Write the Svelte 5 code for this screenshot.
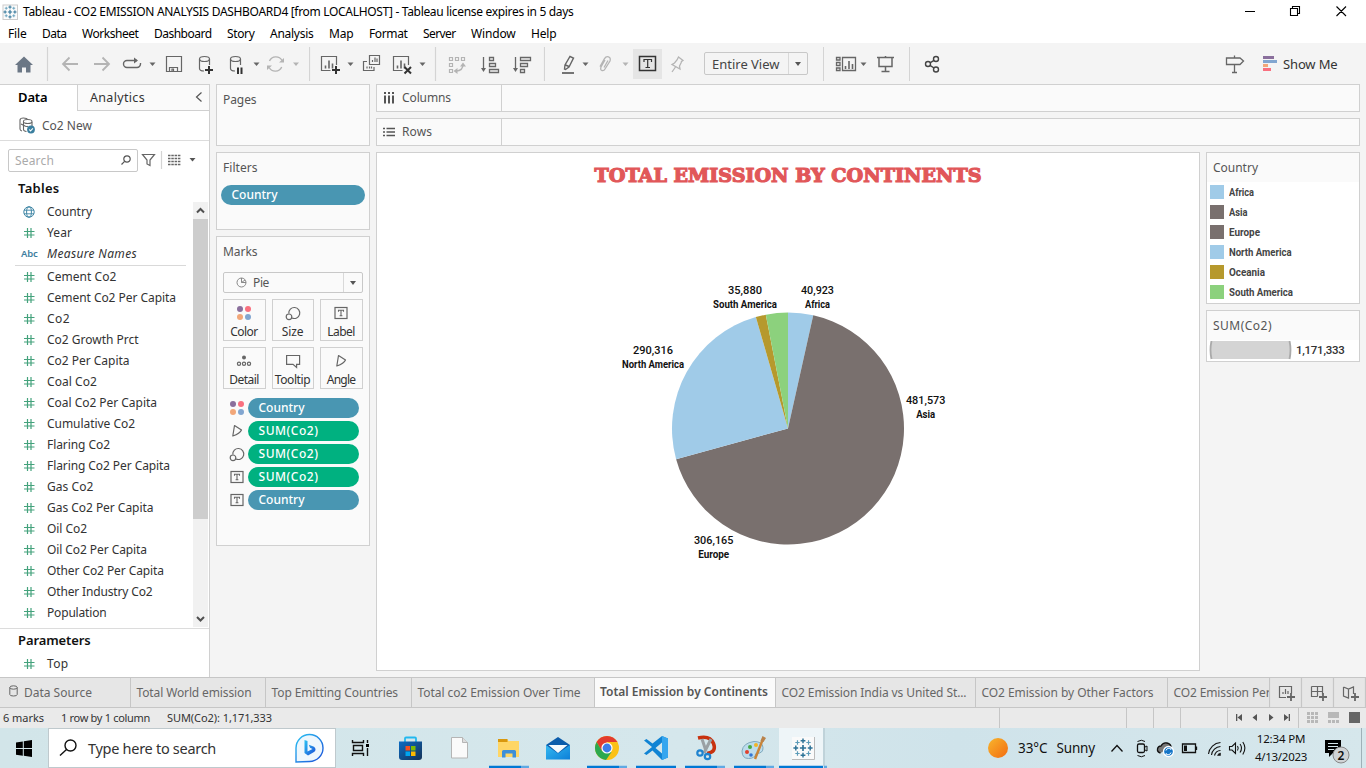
<script>
  const menus = [
    ['File', 8, 18.5], ['Data', 42, 24.5], ['Worksheet', 82, 56.5], ['Dashboard', 154, 57.5], ['Story', 227, 27.5],
    ['Analysis', 270, 43.5], ['Map', 329, 24.5], ['Format', 369, 38.5], ['Server', 423, 32.5], ['Window', 471, 44.5], ['Help', 531, 25.5]
  ].map((m, i, all) => ({ name: m[0], w: m[2], gap: i ? m[1] - all[i - 1][1] - all[i - 1][2] : m[1] }));

  const fields = [
    ['geo', 'Country', 45], ['num', 'Year', 25], ['abc', 'Measure Names', 90]
  ];
  const measures = [
    ['Cement Co2', 69.5], ['Cement Co2 Per Capita', 129], ['Co2', 23], ['Co2 Growth Prct', 91.5], ['Co2 Per Capita', 82.5],
    ['Coal Co2', 50], ['Coal Co2 Per Capita', 110], ['Cumulative Co2', 88], ['Flaring Co2', 63], ['Flaring Co2 Per Capita', 123],
    ['Gas Co2', 46.5], ['Gas Co2 Per Capita', 106.5], ['Oil Co2', 40], ['Oil Co2 Per Capita', 100], ['Other Co2 Per Capita', 117],
    ['Other Industry Co2', 105.5], ['Population', 59.5]
  ];
  const markButtons = [['color', 'Color', 27.5], ['size', 'Size', 21.5], ['label', 'Label', 27.5], ['detail', 'Detail', 29.5], ['tooltip', 'Tooltip', 35.5], ['angle', 'Angle', 28.5]];
  const pills = [
    ['color', 'Country', 46, 'blue'], ['angle', 'SUM(Co2)', 60, 'green'], ['size', 'SUM(Co2)', 60, 'green'],
    ['label', 'SUM(Co2)', 60, 'green'], ['label', 'Country', 46, 'blue']
  ];
  const legend = [
    ['Africa', '#a0cbe8', 25], ['Asia', '#79706e', 18.5], ['Europe', '#79706e', 31],
    ['North America', '#a0cbe8', 62.5], ['Oceania', '#b6992d', 36], ['South America', '#8cd17d', 64]
  ];
  const values = [40923, 481573, 306165, 290316, 16476, 35880];
  const total = values.reduce((a, b) => a + b, 0);
  const cx = 788, cy = 428.5, r = 116;
  // Neighbouring slices of one colour are drawn as a single sector.
  const sectors = [];
  values.forEach((v, i) => {
    const last = sectors[sectors.length - 1];
    if (last && last.color === legend[i][1]) last.value += v;
    else sectors.push({ value: v, color: legend[i][1] });
  });
  let run = 0;
  const slices = sectors.map(({ value, color }) => {
    const a = (run / total) * Math.PI * 2;
    run += value;
    const b = (run / total) * Math.PI * 2;
    const big = b - a > Math.PI ? 1 : 0;
    return {
      color,
      d: `M${cx} ${cy}L${cx + r * Math.sin(a)} ${cy - r * Math.cos(a)}A${r} ${r} 0 ${big} 1 ${cx + r * Math.sin(b)} ${cy - r * Math.cos(b)}Z`
    };
  });
  const labels = [
    ['40,923', 'Africa', 817.5, 294, 33, 25], ['481,573', 'Asia', 925.7, 404, 39.5, 19], ['306,165', 'Europe', 713.7, 544, 39.5, 31],
    ['290,316', 'North America', 653, 354, 40, 62], ['35,880', 'South America', 745, 294, 34, 64]
  ];
  const sheets = [
    ['Total World emission', 135, 115], ['Top Emitting Countries', 146, 126.5], ['Total co2 Emission Over Time', 183, 163],
    ['Total Emission by Continents', 181, 168], ['CO2 Emission India vs United St...', 200, 185],
    ['CO2 Emission by Other Factors', 192, 172], ['CO2 Emission Per', 102, 97]
  ];

  // Spreads the letters of a label so that it fills a set width.
  function fit(node, width) {
    const own = node.getBoundingClientRect().width;
    node.style.letterSpacing = (width - own) / node.textContent.length + 'px';
  }
  // Condenses a label horizontally to a set width.
  function squeeze(node, width) {
    const own = node.getBoundingClientRect().width;
    node.style.transform = `scaleX(${width / own})`;
  }
</script>

{#snippet caret(x, y, c)}
  <path d="M{x - 3} {y - 1.5}h6l-3 3.5z" fill={c} stroke="none" />
{/snippet}

{#snippet bars(x, y)}
  <path d="M{x} {y}v-3M{x + 3.5} {y}v-8M{x + 7} {y}v-5" stroke="#666" stroke-width="1.6" fill="none" />
{/snippet}

{#snippet markIcon(kind)}
  <svg width="16" height="16" viewBox="0 0 16 16" fill="none" stroke="#666" stroke-width="1.2">
    {#if kind === 'color'}
      <g stroke="none"><circle cx="4" cy="4" r="3" fill="#8a6f9c" /><circle cx="12" cy="4" r="3" fill="#f9707f" /><circle cx="4" cy="12" r="3" fill="#f2a779" /><circle cx="12" cy="12" r="3" fill="#82a6d0" /></g>
    {:else if kind === 'size'}
      <path d="M3.800 8.500A5.500 5.500 0 1 1 7 13" /><circle cx="4" cy="11.800" r="2.800" />
    {:else if kind === 'label'}
      <rect x="2" y="2.500" width="12" height="11" /><path d="M5.500 6.800V5.200h5v1.600M8 5.200v5.500M6.600 10.800h2.800" stroke-width="1.100" />
    {:else if kind === 'detail'}
      <circle cx="8" cy="4.500" r="2" fill="#666" stroke="none" /><circle cx="3" cy="10.700" r="1.600" /><circle cx="8" cy="10.700" r="1.600" /><circle cx="13" cy="10.700" r="1.600" />
    {:else if kind === 'tooltip'}
      <path d="M1.600 2.500h13v8.800h-3v3.200l-3.600-3.200H1.600z" />
    {:else}
      <path d="M5.500 2.500L12.500 7Q11 10.500 3.800 13z" stroke-linejoin="round" />
    {/if}
  </svg>
{/snippet}

{#snippet hash()}
  <svg width="12" height="12" viewBox="0 0 12 12"><path d="M4.500 1v10M8 1v10M1 4.500h10.500M1 8h10.500" stroke="#44a27c" stroke-width="1.200" /></svg>
{/snippet}

{#snippet spark(x, y, s)}
  <g transform="translate({x} {y}) scale({s})" stroke="#2d7296" stroke-width="1.2">
    <path d="M0-2.6V2.6M-2.6 0H2.6" stroke-width="1.4" />
    <path d="M0-8v4M-2-6h4M0 4v4M-2 6h4M-8 0h4M-6-2v4M4 0h4M6-2v4" />
    <path d="M-4.6-6.4v3.6M-6.4-4.6h3.6M4.6-6.4v3.6M2.8-4.6h3.6M-4.6 2.8v3.6M-6.4 4.6h3.6M4.6 2.8v3.6M2.8 4.6h3.6" stroke="#5b9bb8" stroke-width="1" />
  </g>
{/snippet}

<div class="app">
  <header class="titlebar">
    <svg width="23" height="22" viewBox="0 0 23 22"><rect x="3" y="4" width="14.5" height="14.5" fill="#fcfcfc" stroke="#ccc" />{@render spark(10, 11, 0.82)}</svg>
    <span use:fit={550.5}>Tableau - CO2 EMISSION ANALYSIS DASHBOARD4 [from LOCALHOST] - Tableau license expires in 5 days</span>
    <svg class="end" width="136" height="22" viewBox="1230 0 136 22" fill="none" stroke="#000" stroke-width="1.1"><path d="M1245 10.5h10M1290.5 7.5h7v7h-7zM1292.500 7.500v-2h7v7h-2M1336.500 5.500l9.500 9.500M1346 5.500l-9.500 9.500" /></svg>
  </header>

  <nav class="menubar">
    {#each menus as m}<span style="margin-left:{m.gap}px;width:{m.w}px"><b use:fit={m.w}>{m.name}</b></span>{/each}
  </nav>

  <div class="toolbar">
    <svg width="309" height="41" viewBox="0 43 309 41" fill="none" stroke="#666" stroke-width="1.2">
      <path d="M24 56.500l9 8.500h-2.500v7.500h-4.500v-5h-4v5h-4.500V65H15z" fill="#6b7785" stroke="none" />
      <path d="M47.500 47v34" stroke="#d4d4d4" />
      <path d="M78 64H63M69.500 57.500L63 64l6.500 6.500M94 64h15M102.500 57.500L109 64l-6.500 6.500" stroke="#b4b4b4" stroke-width="1.8" />
      <path d="M137 60.500H127a3.500 3.500 0 0 0 0 7h10a3.500 3.500 0 0 0 3.500-3.500v-1" stroke-width="1.400" /><path d="M134 57.500v6l4-3z" fill="#666" stroke="none" />
      {@render caret(152.5, 64, '#666')}
      <path d="M166.500 56.500h15v15h-15zM169.500 71.500v-4h8v4M172 71v-2h1.500v2" />
      <path d="M199.500 59v9.500q0 2.500 4.500 2.500M209.500 59v6" /><ellipse cx="204.500" cy="59" rx="5" ry="2.500" /><path d="M209 66v8M205 70h8" stroke="#333" stroke-width="2" />
      <path d="M230.500 59v9.500q0 2.500 4.500 2.500M240.500 59v6" /><ellipse cx="235.500" cy="59" rx="5" ry="2.500" /><path d="M238 67.500v6.500M241.500 67.500v6.500" stroke="#333" stroke-width="2" />
      {@render caret(256.5, 64, '#666')}
      <g stroke="#b4b4b4"><path d="M269.500 61a7 7 0 0 1 12.500-.5M281.700 67a7 7 0 0 1-12.500.5" stroke-width="1.400" /><path d="M279 62.500h5v-4.500zM272 65.500h-5v4.500z" fill="#b4b4b4" stroke="none" /></g>
      {@render caret(296, 64, '#b4b4b4')}
    </svg>
    <svg width="236" height="41" viewBox="309 43 236 41" fill="none" stroke="#666" stroke-width="1.200">
      <path d="M309.500 47v34M435.500 47v34M544.500 47v34" stroke="#d4d4d4" />
      <path d="M336.500 65v-8.500h-15v14h9" />{@render bars(325.5, 68.5)}<path d="M336 66v8M332 70h8" stroke="#333" stroke-width="2" />
      {@render caret(350.5, 64, '#666')}
      <path d="M369.500 55.500h10v9h-10zM367 61.500h-3.500v9h10.500v-3.500M372.500 62v-2M375 62v-4.500M377 62v-3.500M367 68.500v-2M369.500 68.500v-2M371.500 68.500v-2" />
      <path d="M408.500 65v-8.500h-15v14h9" />{@render bars(397.5, 68.5)}<path d="M404.500 67l6.500 6.500M411 67l-6.500 6.500" stroke="#333" stroke-width="2" />
      {@render caret(422.500, 64, '#666')}
      <g stroke="#b4b4b4"><path d="M449.500 57.500h3v3h-3zM455.500 57.500h3v3h-3zM461.500 57.500h3v3h-3zM449.500 63.500h3v3h-3zM449.500 69.500h3v3h-3z" /><path d="M456 71q7 0 7-7" stroke-width="1.500" /><path d="M460 66.500h6l-3-4zM457.500 68v6l-4-3z" fill="#b4b4b4" stroke="none" /></g>
      <path d="M483.500 57v13M489.500 57.500h4v3h-4zM489.500 63.500h6v3h-6zM489.500 69.500h9v3h-9zM515.500 57v13M520.500 57.500h10v3h-10zM520.500 63.500h7v3h-7zM520.500 69.500h4v3h-4z" stroke-width="1.300" />
      <path d="M481 68h5l-2.500 4zM513 68h5l-2.500 4z" fill="#666" stroke="none" />
    </svg>
    <svg width="88" height="41" viewBox="545 43 88 41" fill="none" stroke="#666" stroke-width="1.200">
      <path d="M570 56.500l3.500 1.500-4.500 9-3.500 2.500-1-.5.500-4zM565.500 65l3.500 1.500" stroke-width="1.400" /><path d="M562 73h12" stroke-width="1.800" />
      {@render caret(585.500, 64, '#666')}
      <path d="M605 60l-4 7q-1 3 1 3.500t3-1.500l5-8q1-3.500-1.500-4.200t-4 1.800l-4.500 8M608 60.500l-4 7" stroke="#b4b4b4" stroke-width="1.300" />
      {@render caret(625.5, 64, '#b4b4b4')}
    </svg>
    <div class="pressed"><svg width="29" height="30" viewBox="633 49 29 30" fill="none" stroke="#333"><rect x="639.500" y="56.500" width="16" height="14" stroke-width="1.500" /><path d="M644 62v-2.500h7.500V62M647.700 59.500v8M645.500 67.500h4.500" stroke-width="1.200" /></svg></div>
    <svg width="42" height="41" viewBox="662 43 42 41" fill="none" stroke="#b4b4b4" stroke-width="1.300"><path d="M678.500 57l4.500 3.500-1.500 1-.5 1.500-1.500 3 .5 3-8-4.500 2.500-1.500 2.500-3zM675.500 67l-3.500 5" /></svg>
    <div class="combo"><span use:fit={67.5}>Entire View</span><i></i></div>
    <svg width="408" height="41" viewBox="808 43 408 41" fill="none" stroke="#666" stroke-width="1.300">
      <path d="M823.500 47v34M909.500 47v34" stroke="#d4d4d4" stroke-width="1" />
      <path d="M836.500 57.500h3.500v2.500h-3.500zM836.500 62.500h3.500v3h-3.500zM836.500 68h3.500v2.500h-3.500zM842.500 57.500h13v13h-13z" />{@render bars(845.5, 69)}
      {@render caret(863.5, 64, '#666')}
      <path d="M877 57.500h17M879 58v8.500h13V58M885.500 56v2M885.500 66.500v5M881.500 71.500h8" stroke-width="1.500" />
      <g stroke="#444" stroke-width="1.400"><circle cx="928" cy="64" r="2.500" /><circle cx="936" cy="59" r="2.500" /><circle cx="936" cy="69.500" r="2.500" /><path d="M930 62.800l4-2.500M930 65.300l4 2.700" /></g>
    </svg>
    <svg width="67" height="41" viewBox="1216 43 67 41" fill="none" stroke="#666" stroke-width="1.300">
      <path d="M1226.500 58h13.500l3.500 3-3.500 3.500h-13.500zM1234.500 55.500v2.500M1234.500 64.500v8M1232 72.500h5" />
      <g stroke="none"><path d="M1263 56h11v3h-11z" fill="#8a6f9c" /><path d="M1263 60h14v3h-14z" fill="#82a6d0" /><path d="M1263 64h5v3h-5z" fill="#f2a779" /><path d="M1263 68h8v3h-8z" fill="#f9707f" /></g>
    </svg>
    <span class="showme" use:fit={54.5}>Show Me</span>
  </div>

  <main>
    <aside>
      <div class="panetabs">
        <div class="datatab"><b use:fit={29.5}>Data</b></div>
        <div class="antab"><span use:fit={55}>Analytics</span><svg width="8" height="10" viewBox="0 0 8 10"><path d="M6.500.500L1.500 5l5 4.500" fill="none" stroke="#555" stroke-width="1.200" /></svg></div>
      </div>
      <div class="source">
        <svg width="17" height="17" viewBox="0 0 17 17" fill="none" stroke="#666" stroke-width="1.100"><path d="M3 14Q1 13.500 1 12V3Q1 1 4.500 1T8 2" /><path d="M4.500 5v7.500q0 1.500 3 2M13 5v4" /><ellipse cx="8.700" cy="4.500" rx="4.300" ry="2" /><path d="M2 7l3 1.500q2 1.500 4 .8" /><circle cx="12" cy="12.500" r="3.900" fill="#3b7f9f" stroke="none" /><path d="M10.200 12.500l1.300 1.400 2.400-2.600" stroke="#fff" /></svg>
        <span use:fit={50}>Co2 New</span>
      </div>
      <div class="searchrow">
        <div class="search"><span use:fit={39}>Search</span><svg width="10" height="10" viewBox="0 0 10 10" fill="none" stroke="#555" stroke-width="1.200"><circle cx="6" cy="4" r="3.200" /><path d="M3.600 6.300L.5 9.500" /></svg></div>
        <svg width="64" height="24" viewBox="138 148 64 24" fill="none" stroke="#666" stroke-width="1.200"><path d="M142.500 154.500h12l-4.500 5.500v5.500l-3-1.500v-4z" /><path d="M161.500 151v18" stroke="#d4d4d4" /><path d="M168 155.500h12.500M168 158.500h12.500M168 161.500h12.500M168 164.500h12.500" stroke-dasharray="2.500 .8" stroke-width="1.300" />{@render caret(192.5, 159.5, '#555')}</svg>
      </div>
      <h3><span use:fit={41.5}>Tables</span></h3>
      <div class="listwrap">
        <div class="list">
          {#each fields as f}
            <div class="field">
              {#if f[0] === 'geo'}<svg width="12" height="12" viewBox="0 0 12 12" fill="none" stroke="#3f86a5"><circle cx="6" cy="6" r="5.200" /><ellipse cx="6" cy="6" rx="2.400" ry="5.200" /><path d="M1 4.200h10M1 7.800h10" stroke-width=".9" /></svg>
              {:else if f[0] === 'num'}{@render hash()}
              {:else}<em><b use:fit={16.5}>Abc</b></em>{/if}
              <span class:ital={f[0] === 'abc'} use:fit={f[2]}>{f[1]}</span>
            </div>
          {/each}
          <hr />
          {#each measures as f}<div class="field">{@render hash()}<span use:fit={f[1]}>{f[0]}</span></div>{/each}
        </div>
        <div class="scroll">
          <svg width="15" height="17" viewBox="0 0 15 17"><path d="M4 10.500L7.500 7l3.500 3.500" fill="none" stroke="#505050" stroke-width="2" /></svg>
          <i></i>
          <svg width="15" height="17" viewBox="0 0 15 17"><path d="M4 7l3.500 3.500L11 7" fill="none" stroke="#505050" stroke-width="2" /></svg>
        </div>
      </div>
      <div class="params">
        <h3><span use:fit={72.5}>Parameters</span></h3>
        <div class="field">{@render hash()}<span use:fit={21.5}>Top</span></div>
      </div>
    </aside>

    <section class="cards">
      <div class="card pages"><h4><span use:fit={33.5}>Pages</span></h4></div>
      <div class="card filters"><h4><span use:fit={34.5}>Filters</span></h4><div class="pill blue"><span use:fit={46}>Country</span></div></div>
      <div class="card marks">
        <h4><span use:fit={34.5}>Marks</span></h4>
        <div class="marktype"><svg width="11" height="11" viewBox="0 0 11 11" fill="none" stroke="#888"><circle cx="5.500" cy="5.500" r="4.500" /><path d="M5.500 1v4.500l3.500-2.500M5.500 5.500H10" /></svg><span use:fit={16}>Pie</span><i></i></div>
        <div class="buttons">
          {#each markButtons as b}<div class="mb">{@render markIcon(b[0])}<span use:fit={b[2]}>{b[1]}</span></div>{/each}
        </div>
        <div class="pills">
          {#each pills as p}<div class="prow">{@render markIcon(p[0])}<div class="pill {p[3]}"><span use:fit={p[2]}>{p[1]}</span></div></div>{/each}
        </div>
      </div>
    </section>

    <section class="work">
      <div class="shelf"><div><svg width="12" height="12" viewBox="0 0 12 12" stroke="#555" stroke-width="2"><path d="M2 3.500v8M6 3.500v8M10 3.500v8M1 1h2M5 1h2M9 1h2" /></svg><span use:fit={49}>Columns</span></div></div>
      <div class="shelf"><div><svg width="12" height="12" viewBox="0 0 12 12" stroke="#555" stroke-width="1.500"><path d="M3.500 2.500H12M3.500 6H12M3.500 9.500H12M0 2.500h2M0 6h2M0 9.500h2" /></svg><span use:fit={30}>Rows</span></div></div>
      <div class="lower">
        <div class="view">
          <svg width="822" height="517" viewBox="377 153 822 517">
            <text class="title" x="594.5" y="181.700" textLength="387" lengthAdjust="spacingAndGlyphs">TOTAL EMISSION BY CONTINENTS</text>
            {#each slices as s}<path d={s.d} fill={s.color} />{/each}
            {#each labels as l}
              <text class="lab" x={l[2] - l[4] / 2} y={l[3]} textLength={l[4]} lengthAdjust="spacingAndGlyphs">{l[0]}</text>
              <text class="lab strong" x={l[2] - l[5] / 2} y={l[3] + 14} textLength={l[5]} lengthAdjust="spacingAndGlyphs">{l[1]}</text>
            {/each}
          </svg>
        </div>
        <div class="legends">
          <div class="card leg">
            <h4><span use:fit={45}>Country</span></h4>
            <div class="items">{#each legend as l}<div class="item"><svg width="14" height="14"><rect width="14" height="14" fill={l[1]} /></svg><span use:squeeze={l[2]}>{l[0]}</span></div>{/each}</div>
          </div>
          <div class="card sum">
            <h4><span use:fit={59}>SUM(Co2)</span></h4>
            <div class="range"><svg width="83" height="19" viewBox="0 0 83 19"><path d="M2 0H81Q83 9 81 18H2Q0 9 2 0z" fill="#d4d4d4" /><path d="M2.500 0Q.500 9 2.500 18M80.500 0q2 9 0 18" fill="none" stroke="#aaa" stroke-width="1.800" /></svg><span use:fit={48.5}>1,171,333</span></div>
          </div>
        </div>
      </div>
    </section>
  </main>

  <div class="sheets">
    <div class="ds"><svg width="9" height="12" viewBox="0 0 9 12" fill="none" stroke="#666"><path d="M.8 2.500v7q0 1.500 3.700 1.500t3.700-1.500v-7" /><ellipse cx="4.500" cy="2.500" rx="3.700" ry="1.700" /></svg><span use:fit={68}>Data Source</span></div>
    {#each sheets as s, i}<div class="sheet" class:on={i === 3} style="width:{s[1]}px"><span use:fit={s[2]}>{s[0]}</span></div>{/each}
    <svg width="97" height="30" viewBox="1269 678 97 30" fill="none" stroke="#666" stroke-width="1.200">
      <path d="M1269.500 678v30M1301.500 678v30M1333.500 678v30M1365.500 678v30" stroke="#c6c6c6" />
      <path d="M1286 697.500h-6.500v-11h12v7M1283 694v-2M1285.500 694v-5M1288 694v-3M1311.500 686.500h11v8M1311.500 686.500v10h6M1317.500 686.500v10M1311.500 691.500h11M1343.500 687l5 2 5-2v7M1343.500 687v9l5 2v-9" />
      <path d="M1291 693v8M1287 697h8M1323 693v8M1319 697h8M1355 693v8M1351 697h8" stroke-width="1.800" />
    </svg>
  </div>

  <footer class="status">
    <span class="s1" use:fit={41}>6 marks</span><span class="s2" use:fit={89}>1 row by 1 column</span><span class="s3" use:fit={105}>SUM(Co2): 1,171,333</span>
    <svg class="end" width="368" height="20" viewBox="998 708 368 20">
      <path d="M999.500 708v20M1126.500 708v20M1153.500 708v20M1180.500 708v20M1227.500 708v20M1298.500 708v20" stroke="#c6c6c6" />
      <path d="M1236 714h1.300v7H1236zM1242 714v7l-4.500-3.500zM1257 714v7l-4.500-3.500zM1269 714v7l4.500-3.500zM1284 714v7l4.500-3.500zM1288.700 714h1.300v7h-1.300z" fill="#555" />
      <path d="M1307 713.500h11M1307 717.500h11M1307 721.500h11" stroke="#b8b8b8" stroke-width="3" stroke-dasharray="3 1" />
      <path d="M1328 712h11v6h-11zM1328 720h3v3h-3zM1332 720h3v3h-3zM1336 720h3v3h-3z" fill="#b8b8b8" /><path d="M1349 712h11v11h-11z" fill="#666" />
    </svg>
  </footer>

  <footer class="taskbar">
    <svg width="48" height="40" viewBox="0 728 48 40"><path d="M16 742.500l6.800-1v6.500H16zM23.800 741.300l8.200-1.300v8h-8.200zM16 749h6.800v6.700l-6.800-1zM23.800 749h8.200v8l-8.200-1.200z" /></svg>
    <div class="winsearch">
      <svg width="39" height="38" viewBox="49 729 39 38" fill="none" stroke="#111" stroke-width="1.400"><circle cx="70.500" cy="745.500" r="5.500" /><path d="M66.500 749.500l-6.500 6" /></svg>
      <span use:fit={128}>Type here to search</span>
      <svg class="end" width="42" height="38" viewBox="293 729 42 38"><defs><linearGradient id="bing" x1="0" y1="0" x2="1" y2="1"><stop offset="0" stop-color="#2bc3f3" /><stop offset="1" stop-color="#1b4fd8" /></linearGradient></defs><path d="M296 762v-14a13.500 13.500 0 1 1 13.500 13.500z" fill="#eef7fd" stroke="url(#bing)" stroke-width="1.400" /><path d="M304.500 740l3 1v10.500l5-2.500-2.500-1.200-1.200-3 5.200 2q1.500 1 1.500 2.700t-1.500 2.500l-6 3.500-3.500-2.500z" fill="url(#bing)" /></svg>
    </div>
    <svg width="652" height="40" viewBox="336 728 652 40">
      <defs>
        <linearGradient id="store" x1="0" y1="0" x2="1" y2="1"><stop offset="0" stop-color="#0b6cc4" /><stop offset="1" stop-color="#163257" /></linearGradient>
        <linearGradient id="mail" x1="0" y1="0" x2="1" y2="1"><stop offset="0" stop-color="#35b9f1" /><stop offset="1" stop-color="#0c7fd8" /></linearGradient>
      </defs>
      <path d="M352.500 740v2.500h11V740M352.500 756v-2.500h11v2.500M353.500 745.500h9v5h-9zM367.500 740v3M367.500 748v8" fill="none" stroke="#111" stroke-width="1.400" /><path d="M366 744h3v3h-3z" />
      <path d="M405 742v-3.500q0-1 1-1h9q1 0 1 1v3.500" fill="none" stroke="#22b8ef" stroke-width="1.800" /><path d="M399 741.500h23V757q0 3-3 3h-17q-3 0-3-3z" fill="url(#store)" /><path d="M405.500 746h4.500v4.500h-4.500z" fill="#f25022" /><path d="M411 746h4.500v4.500H411z" fill="#7fba00" /><path d="M405.500 751.500h4.500v4.500h-4.500z" fill="#00a4ef" /><path d="M411 751.500h4.500v4.500H411z" fill="#ffb900" />
      <path d="M451.500 737.500h11l5 5v15.500h-16z" fill="#fafafa" stroke="#b5b5b5" /><path d="M462.500 737.500v5h5" fill="#ddd" stroke="#b5b5b5" />
      <path d="M498 739h9l1.500 2H519v16h-21z" fill="#ffd665" /><path d="M498 739h9.500v3H498z" fill="#d9980d" /><path d="M502 757.500v-6q0-1.500 1.500-1.500h11q1.500 0 1.500 1.500v6h-3.500v-4h-7v4z" fill="#3d8fd8" />
      <path d="M546 745l12-8 12 8v14h-24z" fill="#0b5cab" /><path d="M546 745l12 8.500 12-8.500v14.500h-24z" fill="url(#mail)" /><path d="M548.500 745h19L558 753z" fill="#f4f9fd" />
      <g transform="translate(607 748)"><circle r="12" fill="#fbc116" /><path d="M-10.400-6A12 12 0 0 1 10.400-6H0L-5.200 3z" fill="#e33b2e" /><path d="M-10.400-6A12 12 0 0 0-1 12L4.500 4-5 3z" fill="#2da94f" /><circle r="5.600" fill="#fff" /><circle r="4.400" fill="#3f7de8" /></g>
      <path d="M662 736l6 2.500v19l-6 2.500-9.500-9.500-6 4.500-2.500-1.500 8-6.500-8-6.500 2.500-1.500 6 4.500zM662 742.500l-6.500 5.500 6.500 5.500z" fill="#1184d4" fill-rule="evenodd" /><path d="M662 736l6 2.500v19l-6 2.500z" fill="#35a6ef" />
      <path d="M698 738q12-3 15.500 5.500t-6.500 10" fill="none" stroke="#c8320f" stroke-width="3.500" /><path d="M702 739l4 12M711 739l-7 14" stroke="#9aa0a4" stroke-width="3" /><circle cx="700" cy="753" r="2.700" fill="none" stroke="#1f83cf" stroke-width="2.200" /><circle cx="707.500" cy="756.500" r="2.700" fill="none" stroke="#1f83cf" stroke-width="2.200" />
      <path d="M742 751q1-8 12-9.500 8.500 0 9 6t-7 6q-1 5-7.500 5t-6.500-7.500z" fill="#bcdcec" stroke="#7fa9bd" /><circle cx="747" cy="752" r="2" fill="#e0412e" /><circle cx="750" cy="747" r="2" fill="#45a845" /><circle cx="756" cy="745" r="2" fill="#f1b426" /><circle cx="751" cy="755" r="1.800" fill="#3376d4" /><path d="M763 739l-8 20" stroke="#c88438" stroke-width="2.500" /><path d="M760.500 741l2-5 3.500 2-2.500 4z" fill="#b9824b" />
      <path d="M779 728h44v38h-44z" fill="#eef5f8" /><path d="M824 728v38" stroke="#adc0c8" /><path d="M792 737h22v22h-22z" fill="#fafafa" /><path d="M792 759.500h22.500V737" fill="none" stroke="#bbb" />{@render spark(803, 748, 1.2)}
      <path d="M489 767h32M587 767h32M636 767h40M685 767h32M734 767h32M779 767h44" stroke="#0078d4" stroke-width="2.500" /><path d="M521 767h8M619 767h8M717 767h8M766 767h8M824 767h3" stroke="#5fa9e3" stroke-width="2.500" />
    </svg>
    <svg width="30" height="40" viewBox="988 728 30 40"><defs><linearGradient id="sun" x1="0" y1="0" x2="1" y2="1"><stop offset="0" stop-color="#f8b62d" /><stop offset="1" stop-color="#f36b10" /></linearGradient></defs><circle cx="998" cy="748" r="10" fill="url(#sun)" /></svg>
    <span class="weather"><span use:fit={29.5}>33°C</span><span use:fit={38.5}>Sunny</span></span>
    <svg width="155" height="40" viewBox="1100 728 155 40" fill="none" stroke="#111" stroke-width="1.300">
      <path d="M1111.500 751.500l5.500-6 5.500 6" /><rect x="1137.500" y="744" width="7" height="8.500" rx="1.500" /><path d="M1145 747l2-1v5l-2-1M1137.500 741.500q4-2.500 7.500 0M1137.500 755.500q4 2.500 7.500 0" stroke-width="1" />
      <path d="M1160.500 753q-3.500-1-3-4t3.500-3q2-4 6-3t4 4" fill="#777" /><circle cx="1168.500" cy="751.500" r="5" fill="#1375c8" stroke="#fff" /><path d="M1166 750.500a2.800 2.800 0 0 1 5-1V748M1171 752.500a2.800 2.800 0 0 1-5 1v1.500" stroke="#fff" stroke-width="1" />
      <path d="M1182.500 744h13v8.500h-13zM1196.500 746.500v3.500" /><path d="M1184 745.500h3v5.500h-3z" fill="#111" stroke="none" />
      <path d="M1208.500 754a13 13 0 0 1 12-11.500M1211.500 755a9.500 9.500 0 0 1 9-8.500M1214.500 755.500a6.500 6.500 0 0 1 6-5" stroke-width="1.100" /><path d="M1217.500 755.500a3.500 3.500 0 0 1 3-2.500v2.500z" fill="#111" stroke-width=".5" />
      <path d="M1229.500 746.500h2.500l3.500-3.500v10.500l-3.500-3.500h-2.500zM1237.500 746q1.500 2.200 0 4.500M1240 744q3 4 0 8.500M1242.800 742q4.200 6 0 12.500" stroke-width="1.100" />
    </svg>
    <div class="clock"><span use:fit={48.5}>12:34 PM</span><span use:fit={52}>4/13/2023</span></div>
    <svg width="59" height="40" viewBox="1307 728 59 40"><path d="M1325 740h16v13h-8l-4 4v-4h-4z" /><path d="M1328 743.500h10M1328 746.500h10M1328 749.500h6" stroke="#d5e5ea" /><circle cx="1341" cy="755" r="8" fill="#d0d3d5" stroke="#888" /><text x="1341" y="759.500" text-anchor="middle" class="badge">2</text><path d="M1361.500 728v40" stroke="#9fb1b8" /></svg>
  </footer>
</div>

<style>
  :global(body) { margin: 0; overflow: hidden; }
  .app { width: 1366px; height: 768px; display: flex; flex-direction: column; background: #f4f4f4; font-family: "Noto Sans", "Open Sans", sans-serif; font-size: 12px; color: #333; overflow: hidden; }
  .app :global(*) { box-sizing: border-box; }
  svg { display: block; flex: none; }
  span, b { white-space: nowrap; display: inline-block; flex: none; }
  .end { margin-left: auto; }
  .titlebar { height: 22px; flex: none; display: flex; align-items: center; background: #fff; color: #000; line-height: 22px; padding-top: 1px; }
  .menubar { height: 21px; flex: none; display: flex; background: #fff; color: #000; line-height: 23px; }
  .menubar b { font-weight: 400; }
  .toolbar { height: 41px; flex: none; display: flex; align-items: center; }
  .pressed { width: 29px; height: 30px; background: #e5e5e5; }
  .combo { width: 104px; height: 23px; border: 1px solid #c8c8c8; border-radius: 2px; display: flex; align-items: center; justify-content: space-between; padding-left: 7px; color: #444; font-size: 13px; }
  .combo i, .marktype i { width: 19px; height: 100%; border-left: 1px solid #d9d9d9; display: grid; place-items: center; }
  .combo i::after, .marktype i::after { content: ""; border: 3.500px solid transparent; border-top: 4px solid #555; border-bottom: 0; }
  .showme { font-size: 13px; color: #333; }

  main { height: 593px; flex: none; display: flex; }
  aside { width: 210px; border-right: 1px solid #d0d0d0; border-top: 1px solid #d0d0d0; background: #fff; display: flex; flex-direction: column; }
  .panetabs { display: flex; height: 26px; flex: none; }
  .datatab { width: 77px; padding: 3px 0 0 18px; color: #000; font-size: 13px; line-height: 19px; }
  .datatab b { font-weight: 600; }
  .antab { flex: 1; background: #fafafa; border-left: 1px solid #d0d0d0; border-bottom: 1px solid #d0d0d0; display: flex; justify-content: space-between; align-items: center; padding: 0 6px 1px 12px; font-size: 12.500px; }
  .source { height: 30px; flex: none; border-bottom: 1px solid #dcdcdc; display: flex; align-items: center; gap: 6px; padding: 0 0 1px 19px; color: #555; }
  .searchrow { height: 24px; flex: none; margin-top: 7px; display: flex; padding-left: 8px; align-items: center; }
  .search { width: 130px; height: 23px; border: 1px solid #c8c8c8; border-radius: 2px; display: flex; justify-content: space-between; align-items: center; padding: 0 6px; color: #aaa; }
  h3 { margin: 0; padding-left: 18px; font-size: 13px; font-weight: 600; color: #111; height: 30px; line-height: 32px; flex: none; }
  .listwrap { display: flex; height: 426px; flex: none; }
  .list { width: 193px; margin-top: -1px; }
  .field { height: 21px; display: flex; align-items: center; padding-left: 23px; color: #333; }
  .field span { margin-left: 12px; }
  .field em { width: 12px; font-style: normal; font-size: 9.500px; color: #3f7f9f; margin-left: -2px; margin-right: 2px; }
  .field em b { font-weight: 600; }
  .field .ital { font-style: italic; }
  hr { border: 0; height: 1px; background: #d9d9d9; margin: 1px 7px 0 15px; }
  .scroll { width: 15px; background: #f1f1f1; display: flex; flex-direction: column; height: 425px; }
  .scroll i { background: #cdcdcd; height: 300px; margin-bottom: auto; }
  .params { border-top: 1px solid #dcdcdc; height: 49px; }
  .params h3 { height: 24px; line-height: 23px; }

  .cards { width: 154px; margin-left: 6px; display: flex; flex-direction: column; gap: 6px; }
  .card { border: 1px solid #d0d0d0; background: #fafafa; }
  .pages { height: 62px; } .filters { height: 78px; } .marks { height: 310px; }
  h4 { margin: 0; padding-left: 6px; height: 30px; line-height: 30px; font-size: 12px; font-weight: 400; color: #555; }
  .pill { height: 20px; border-radius: 10px; color: #fff; line-height: 20px; padding-left: 10.500px; font-weight: 500; }
  .filters .pill { width: 144px; margin: 2px 4px 0; }
  .blue { background: #4996b2; } .green { background: #00b180; }
  .marktype { width: 140px; height: 21px; margin: 5px 6px 0; border: 1px solid #c8c8c8; border-radius: 2px; display: flex; align-items: center; padding-left: 12px; color: #555; }
  .marktype span { margin-left: 6px; } .marktype i { margin-left: auto; }
  .buttons { display: grid; grid-template-columns: 43px 42px 43px; gap: 6px; margin: 6px 6px 0; }
  .mb { height: 42px; border: 1px solid #d0d0d0; display: flex; flex-direction: column; align-items: center; padding: 5px 1px 0 0; color: #333; }
  .mb span { line-height: 17px; margin-top: 2px; }
  .pills { margin: 9px 0 0 12px; display: flex; flex-direction: column; gap: 3px; }
  .prow { display: flex; align-items: center; gap: 3px; }
  .prow .pill { width: 111px; }

  .work { width: 984px; margin-left: 6px; display: flex; flex-direction: column; gap: 6px; }
  .shelf { height: 28px; border: 1px solid #d0d0d0; background: #fafafa; flex: none; }
  .shelf div { width: 125px; height: 26px; border-right: 1px solid #d0d0d0; display: flex; align-items: center; gap: 7px; padding: 0 0 1px 6px; color: #555; }
  .lower { display: flex; gap: 6px; }
  .view { width: 824px; height: 519px; border: 1px solid #d0d0d0; background: #fff; }
  .title { font: bold 19px "DejaVu Serif", serif; fill: #e15759; stroke: #e15759; stroke-width: 1.200px; }
  .lab { font: 500 11.500px Roboto, sans-serif; fill: #111; }
  .strong { font-weight: 700; }
  .legends { width: 154px; display: flex; flex-direction: column; gap: 6px; }
  .leg { height: 152px; } .leg h4, .sum h4 { height: 29px; }
  .items { background: #fff; padding: 0 3px; height: 121px; }
  .item { height: 20px; display: flex; align-items: center; gap: 5px; font: bold 11.500px Roboto, sans-serif; color: #444; }
  .item span { transform-origin: left; }
  .sum { height: 52px; }
  .range { height: 21px; background: #fff; display: flex; align-items: center; padding: 0 0 1px 2px; gap: 4px; font: 500 11.500px Roboto, sans-serif; color: #333; }

  .sheets { height: 31px; flex: none; display: flex; background: #e6e6e6; border-top: 1px solid #c6c6c6; border-bottom: 1px solid #c6c6c6; color: #666; overflow: hidden; }
  .ds { width: 130px; display: flex; align-items: center; padding-left: 9px; gap: 6px; }
  .ds svg { margin-top: -3px; }
  .sheet { flex: none; border-left: 1px solid #c6c6c6; padding-left: 5.500px; line-height: 29px; overflow: hidden; }
  .sheet.on { background: #fafafa; font-weight: 600; color: #555; padding-left: 5px; line-height: 27px; }
  .status { height: 20px; flex: none; display: flex; background: #eaeaea; line-height: 20px; font-size: 11px; color: #333; }
  .s1 { margin-left: 3px; } .s2 { margin-left: 17px; } .s3 { margin-left: 17px; }
  .taskbar { height: 40px; flex: none; display: flex; background: linear-gradient(90deg, #d2e5e9, #d5e7ec 50%, #cfe3ea 70%, #d6e7ec); color: #111; }
  .winsearch { width: 288px; height: 40px; background: #fff; border: 1px solid #bfc9cd; display: flex; align-items: center; font-size: 14.500px; color: #333; }
  .weather { display: flex; width: 82px; gap: 9px; line-height: 41px; font-size: 13.500px; }
  .clock { width: 52px; display: flex; flex-direction: column; align-items: center; font-size: 11.500px; line-height: 18px; padding-top: 2px; }
  .badge { font: 600 12px "Noto Sans", sans-serif; fill: #111; }
</style>
